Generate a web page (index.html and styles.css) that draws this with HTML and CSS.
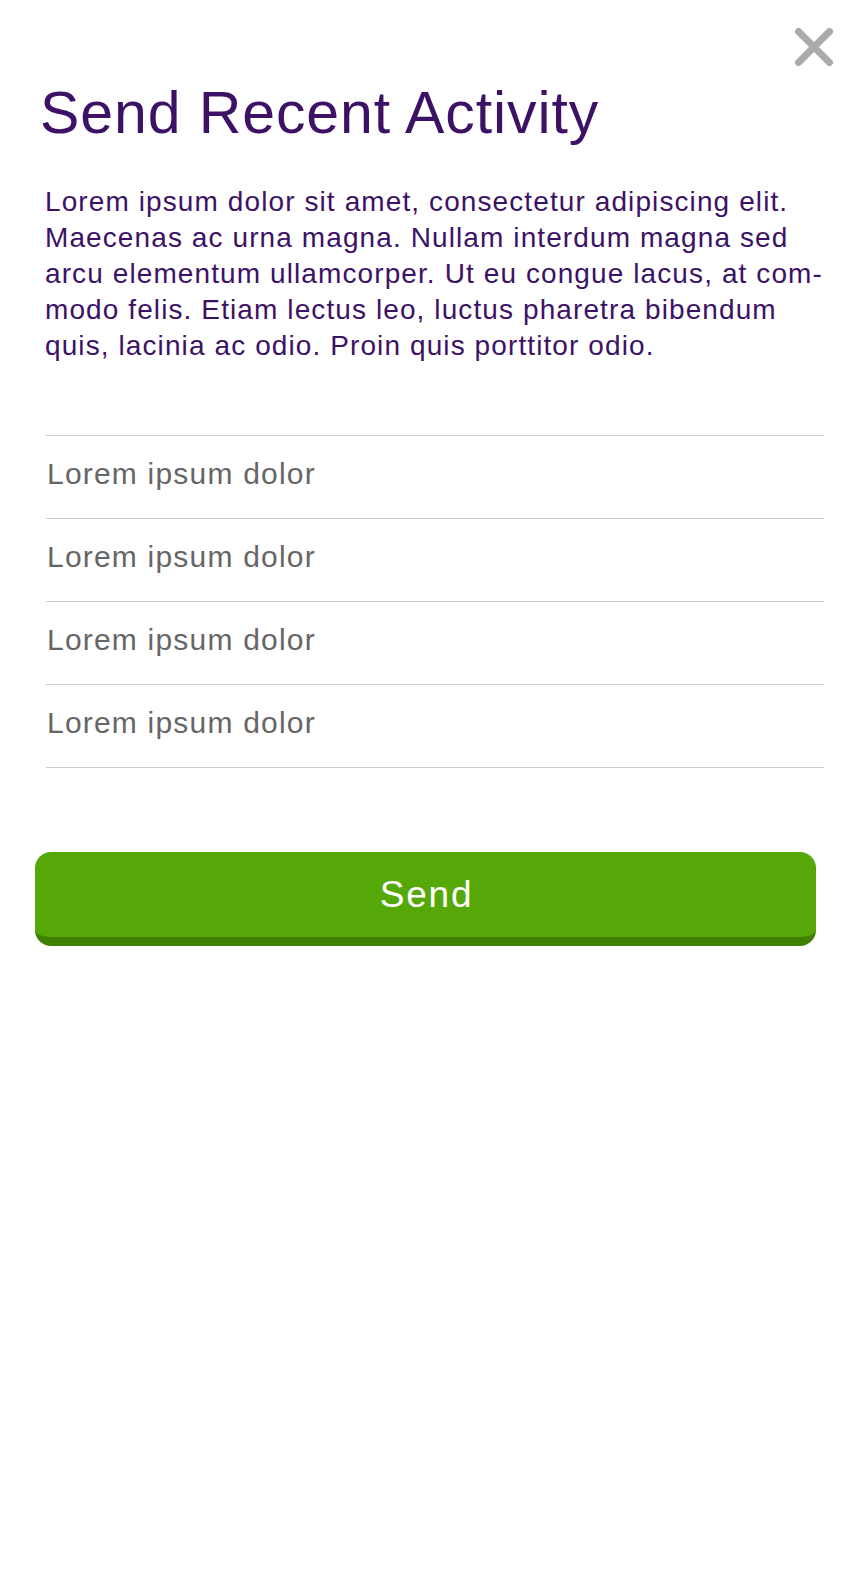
FILE: index.html
```html
<!DOCTYPE html>
<html lang="en">
<head>
<meta charset="utf-8">
<title>Send Recent Activity</title>
<link rel="stylesheet" href="styles.css">
</head>
<body>
<div class="sheet">
  <button class="close" aria-label="Close">
    <svg width="40" height="40" viewBox="0 0 40 40"><path d="M4.5 4.5L35.5 35.5M35.5 4.5L4.5 35.5" stroke="#ababab" stroke-width="7" stroke-linecap="round" fill="none"/></svg>
  </button>
  <h1 class="title">Send Recent Activity</h1>
  <p class="intro">Lorem ipsum dolor sit amet, consectetur adipiscing elit.<br>Maecenas ac urna magna. Nullam interdum magna sed<br>arcu elementum ullamcorper. Ut eu congue lacus, at com-<br>modo felis. Etiam lectus leo, luctus pharetra bibendum<br>quis, lacinia ac odio. Proin quis porttitor odio.</p>
  <ul class="items">
    <li class="item">Lorem ipsum dolor</li>
    <li class="item">Lorem ipsum dolor</li>
    <li class="item">Lorem ipsum dolor</li>
    <li class="item">Lorem ipsum dolor</li>
  </ul>
  <button class="send">Send</button>
</div>
</body>
</html>
```
FILE: styles.css
```css
html, body {
  margin: 0;
  padding: 0;
  background: #ffffff;
}
body {
  font-family: "Liberation Sans", Arial, Helvetica, sans-serif;
}
.sheet {
  position: relative;
  display: flex;
  flex-direction: column;
  align-items: flex-start;
  padding: 79px 30px 0 35px;
}
.close {
  position: absolute;
  top: 27px;
  left: 794px;
  width: 40px;
  height: 40px;
  padding: 0;
  border: 0;
  background: none;
  cursor: pointer;
}
.close svg {
  display: block;
}
.title {
  margin: 0 0 0 5px;
  font-size: 59px;
  line-height: 68px;
  font-weight: 400;
  letter-spacing: 0.9px;
  color: #3d1266;
}
.intro {
  margin: 37px 0 0 10px;
  font-size: 28px;
  line-height: 36px;
  letter-spacing: 1.1px;
  color: #3d1266;
}
.items {
  list-style: none;
  margin: 71px 0 0 11px;
  padding: 0;
  width: 778px;
  border-top: 1px solid #cccccc;
}
.item {
  padding: 0 0 6px 1px;
  font-size: 30px;
  line-height: 76px;
  letter-spacing: 1.2px;
  color: #666666;
  border-bottom: 1px solid #cccccc;
}
.send {
  box-sizing: border-box;
  margin-top: 84px;
  width: 781px;
  height: 94px;
  border: 0;
  border-bottom: 9px solid #3f7f02;
  border-radius: 16px;
  background: #56a808;
  color: #ffffff;
  font-family: inherit;
  font-size: 37px;
  line-height: 85px;
  letter-spacing: 1.8px;
  padding: 0 0 0 2px;
  cursor: pointer;
}
```
